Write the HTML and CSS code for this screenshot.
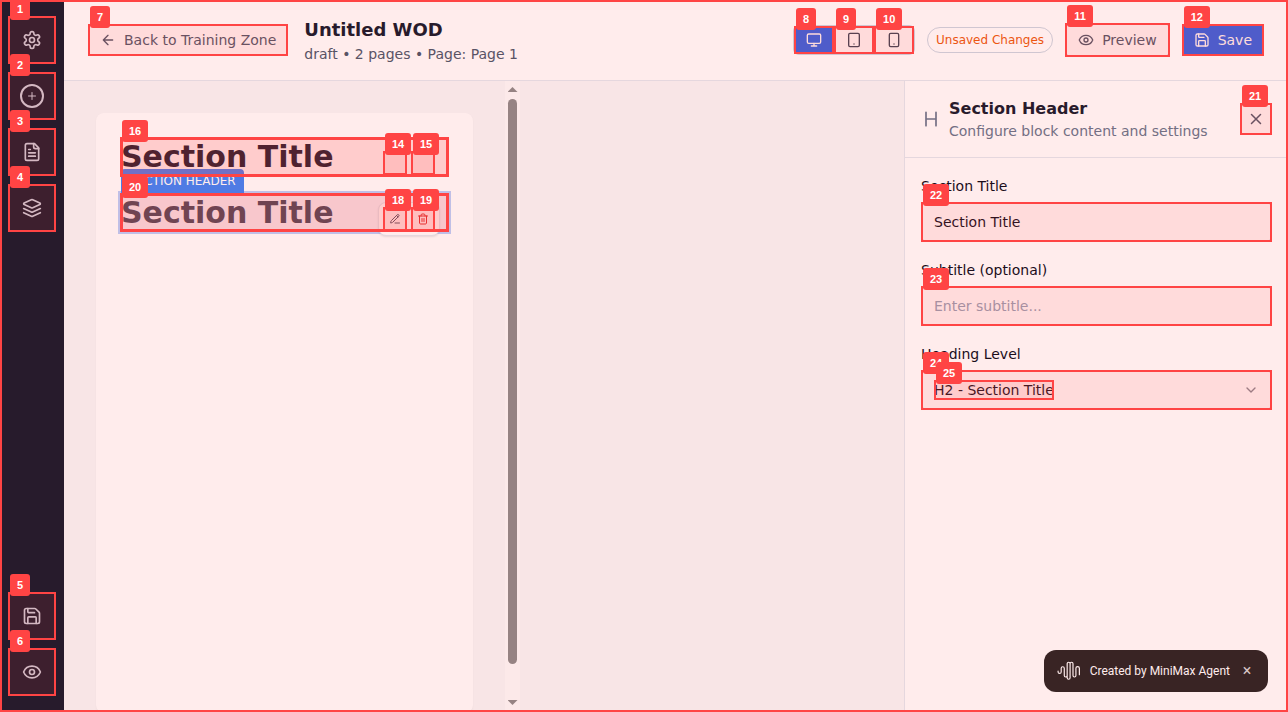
FILE: index.html
```html
<!DOCTYPE html>
<html lang="en">
<head>
<meta charset="utf-8">
<title>Untitled WOD</title>
<link rel="stylesheet" href="styles.css">
</head>
<body>
<div class="app">
  <nav class="rail" aria-label="Tools">
    <button class="rail-btn" aria-label="Settings"><svg class="icon i20" viewBox="0 0 24 24"><path d="M12.22 2h-.44a2 2 0 0 0-2 2v.18a2 2 0 0 1-1 1.73l-.43.25a2 2 0 0 1-2 0l-.15-.08a2 2 0 0 0-2.73.73l-.22.38a2 2 0 0 0 .73 2.73l.15.1a2 2 0 0 1 1 1.72v.51a2 2 0 0 1-1 1.74l-.15.09a2 2 0 0 0-.73 2.73l.22.38a2 2 0 0 0 2.73.73l.15-.08a2 2 0 0 1 2 0l.43.25a2 2 0 0 1 1 1.73V20a2 2 0 0 0 2 2h.44a2 2 0 0 0 2-2v-.18a2 2 0 0 1 1-1.73l.43-.25a2 2 0 0 1 2 0l.15.08a2 2 0 0 0 2.73-.73l.22-.39a2 2 0 0 0-.73-2.73l-.15-.08a2 2 0 0 1-1-1.74v-.5a2 2 0 0 1 1-1.74l.15-.09a2 2 0 0 0 .73-2.73l-.22-.38a2 2 0 0 0-2.73-.73l-.15.08a2 2 0 0 1-2 0l-.43-.25a2 2 0 0 1-1-1.73V4a2 2 0 0 0-2-2z"/><circle cx="12" cy="12" r="3"/></svg><span class="mark"><b>1</b></span></button>
    <button class="rail-btn" aria-label="Add block"><span class="ring"><svg class="icon i12" viewBox="0 0 24 24"><path d="M5 12h14M12 5v14"/></svg></span><span class="mark"><b>2</b></span></button>
    <button class="rail-btn" aria-label="Pages"><svg class="icon i20" viewBox="0 0 24 24"><path d="M15 2H6a2 2 0 0 0-2 2v16a2 2 0 0 0 2 2h12a2 2 0 0 0 2-2V7Z"/><path d="M14 2v4a2 2 0 0 0 2 2h4M10 9H8M16 13H8M16 17H8"/></svg><span class="mark"><b>3</b></span></button>
    <button class="rail-btn" aria-label="Layers"><svg class="icon i20" viewBox="0 0 24 24"><path d="m12.83 2.18a2 2 0 0 0-1.66 0L2.6 6.08a1 1 0 0 0 0 1.83l8.58 3.91a2 2 0 0 0 1.66 0l8.58-3.9a1 1 0 0 0 0-1.83Z"/><path d="m22 17.65-9.17 4.16a2 2 0 0 1-1.66 0L2 17.65"/><path d="m22 12.65-9.17 4.16a2 2 0 0 1-1.66 0L2 12.65"/></svg><span class="mark"><b>4</b></span></button>
    <span class="spacer"></span>
    <button class="rail-btn" aria-label="Save page"><svg class="icon i20" viewBox="0 0 24 24"><path d="M15.2 3a2 2 0 0 1 1.4.6l3.8 3.8a2 2 0 0 1 .6 1.4V19a2 2 0 0 1-2 2H5a2 2 0 0 1-2-2V5a2 2 0 0 1 2-2z"/><path d="M17 21v-7a1 1 0 0 0-1-1H8a1 1 0 0 0-1 1v7M7 3v4a1 1 0 0 0 1 1h7"/></svg><span class="mark"><b>5</b></span></button>
    <button class="rail-btn" aria-label="Preview page"><svg class="icon i20" viewBox="0 0 24 24"><path d="M2.062 12.348a1 1 0 0 1 0-.696 10.75 10.75 0 0 1 19.876 0 1 1 0 0 1 0 .696 10.75 10.75 0 0 1-19.876 0"/><circle cx="12" cy="12" r="3"/></svg><span class="mark"><b>6</b></span></button>
  </nav>

  <div class="workspace">
    <header class="topbar">
      <button class="btn back"><svg class="icon i16" viewBox="0 0 24 24"><path d="m12 19-7-7 7-7M19 12H5"/></svg>Back to Training Zone<span class="mark"><b>7</b></span></button>
      <div class="doc">
        <h1>Untitled WOD</h1>
        <p>draft • 2 pages • Page: Page 1</p>
      </div>
      <div class="actions">
        <div class="devices">
          <button class="device active" aria-label="Desktop"><svg class="icon i16" viewBox="0 0 24 24"><rect width="20" height="14" x="2" y="3" rx="2"/><path d="M8 21h8M12 17v4"/></svg><span class="mark"><b>8</b></span></button>
          <button class="device" aria-label="Tablet"><svg class="icon i16" viewBox="0 0 24 24"><rect width="16" height="20" x="4" y="2" rx="2"/><path d="M12 18h.01"/></svg><span class="mark"><b>9</b></span></button>
          <button class="device" aria-label="Phone"><svg class="icon i16" viewBox="0 0 24 24"><rect width="14" height="20" x="5" y="2" rx="2"/><path d="M12 18h.01"/></svg><span class="mark"><b>10</b></span></button>
        </div>
        <span class="status">Unsaved Changes</span>
        <button class="btn outline"><svg class="icon i16" viewBox="0 0 24 24"><path d="M2.062 12.348a1 1 0 0 1 0-.696 10.75 10.75 0 0 1 19.876 0 1 1 0 0 1 0 .696 10.75 10.75 0 0 1-19.876 0"/><circle cx="12" cy="12" r="3"/></svg>Preview<span class="mark"><b>11</b></span></button>
        <button class="btn primary"><svg class="icon i16" viewBox="0 0 24 24"><path d="M15.2 3a2 2 0 0 1 1.4.6l3.8 3.8a2 2 0 0 1 .6 1.4V19a2 2 0 0 1-2 2H5a2 2 0 0 1-2-2V5a2 2 0 0 1 2-2z"/><path d="M17 21v-7a1 1 0 0 0-1-1H8a1 1 0 0 0-1 1v7M7 3v4a1 1 0 0 0 1 1h7"/></svg>Save<span class="mark"><b>12</b></span></button>
      </div>
    </header>

    <div class="body">
      <main class="stage">
        <div class="canvas">
          <div class="sheet">
            <section class="block">
              <h2>Section Title</h2>
              <span class="mark double"><b>16</b></span>
              <div class="tools ghost">
                <button class="tool" aria-label="Edit first block"><span class="mark"><b>14</b></span></button>
                <button class="tool" aria-label="Delete first block"><span class="mark"><b>15</b></span></button>
              </div>
            </section>
            <section class="block selected">
              <span class="tag">SECTION HEADER</span>
              <h2>Section Title</h2>
              <span class="mark double"><b>20</b></span>
              <div class="tools">
                <button class="tool" aria-label="Edit block"><svg class="icon i12" viewBox="0 0 24 24"><path d="M12 20h9M16.376 3.622a1 1 0 0 1 3.002 3.002L7.368 18.635a2 2 0 0 1-.855.506l-2.872.838a.5.5 0 0 1-.62-.62l.838-2.872a2 2 0 0 1 .506-.854zM15 5l3 3"/></svg><span class="mark"><b>18</b></span></button>
                <button class="tool danger" aria-label="Delete block"><svg class="icon i12" viewBox="0 0 24 24"><path d="M3 6h18M19 6v14c0 1-1 2-2 2H7c-1 0-2-1-2-2V6M8 6V4c0-1 1-2 2-2h4c1 0 2 1 2 2v2M10 11v6M14 11v6"/></svg><span class="mark"><b>19</b></span></button>
              </div>
            </section>
          </div>
        </div>
        <div class="scrollbar" aria-hidden="true">
          <span class="arrow up"></span><span class="thumb"></span><span class="arrow down"></span>
        </div>
      </main>

      <aside class="panel">
        <div class="panel-head">
          <svg class="icon i20" viewBox="0 0 24 24"><path d="M6 12h12M6 20V4M18 20V4"/></svg>
          <div class="panel-title">
            <h3>Section Header</h3>
            <p>Configure block content and settings</p>
          </div>
          <button class="close" aria-label="Close panel"><svg class="icon i18" viewBox="0 0 24 24"><path d="M18 6 6 18M6 6l12 12"/></svg><span class="mark"><b>21</b></span></button>
        </div>
        <form class="fields">
          <div class="field">
            <label for="title">Section Title</label>
            <div class="control"><input id="title" type="text" value="Section Title"><span class="mark"><b>22</b></span></div>
          </div>
          <div class="field">
            <label for="subtitle">Subtitle (optional)</label>
            <div class="control"><input id="subtitle" type="text" placeholder="Enter subtitle..."><span class="mark"><b>23</b></span></div>
          </div>
          <div class="field">
            <label for="level">Heading Level</label>
            <div class="control"><select id="level"><option>H2 - Section Title</option></select><svg class="icon i16 chevron" viewBox="0 0 24 24"><path d="m6 9 6 6 6-6"/></svg><span class="mark"><b>24</b></span><span class="mark value-mark"><b>25</b></span></div>
          </div>
        </form>
      </aside>
    </div>
  </div>

  <div class="toast">
    <svg class="wave" viewBox="0 0 26 22"><path d="M1 11v1a1.700 1.700 0 0 0 3.400 0V8a1.700 1.700 0 0 1 3.400 0v8a1.600 1.600 0 0 0 3.200 0V3a1.600 1.600 0 0 1 3.200 0v10M11 14v4.500a1.600 1.600 0 0 0 3.200 0V3a1.600 1.600 0 0 1 3.200 0v13a1.600 1.600 0 0 0 3.200 0V8a1.900 1.900 0 0 1 3.800 0v7"/></svg>
    <span>Created by MiniMax Agent</span>
    <button class="toast-close" aria-label="Dismiss">×</button>
  </div>
  <span class="mark frame"></span>
</div>
</body>
</html>
```
FILE: styles.css
```css
* { box-sizing: border-box; }
body, h1, h2, h3, p { margin: 0; }
body { font: 14px/20px "DejaVu Sans", sans-serif; color: #0f172a; background: #fff; }
button, input, select { font: inherit; color: inherit; margin: 0; }
button { border: 0; background: none; padding: 0; display: flex; align-items: center; justify-content: center; position: relative; }

.app { position: relative; display: flex; height: 100vh; overflow: hidden; }
.icon { flex: none; fill: none; stroke: currentColor; stroke-width: 2; stroke-linecap: round; stroke-linejoin: round; }
.i20 { width: 20px; height: 20px; }
.i18 { width: 18px; height: 18px; }
.i16 { width: 16px; height: 16px; }
.i12 { width: 12px; height: 12px; }

/* numbered element outlines */
.mark { position: absolute; inset: 0; z-index: 10; border: 2px solid #f44; background: rgba(255, 68, 68, .1); pointer-events: none; }
.mark b { position: absolute; left: 0; top: -20px; padding: 0 7px; border-radius: 3px; background: #f44; color: #fff; font: bold 11px/22px "Liberation Sans", sans-serif; }
.mark.double { border-width: 3px; background: rgba(255, 68, 68, .19); }
.mark.double b { left: -1px; top: -20px; }
.mark.frame { z-index: 5; }

.rail { width: 64px; flex: none; display: flex; flex-direction: column; gap: 8px; padding: 16px 8px; background: #0f172a; color: #cbd5e1; }
.rail-btn { height: 48px; flex: none; }
.spacer { flex: 1; }
.ring { width: 24px; height: 24px; border: 2px solid #cbd5e1; border-radius: 50%; display: grid; place-items: center; }

.workspace { flex: 1; min-width: 0; display: flex; flex-direction: column; }
.topbar { display: flex; align-items: center; gap: 16px; padding: 16px 24px; border-bottom: 1px solid #e2e8f0; }
.btn { gap: 8px; height: 32px; padding: 0 12px; border-radius: 6px; color: #475569; white-space: nowrap; }
.outline { height: 34px; border: 1px solid #cbd5e1; }
.outline .mark { inset: -1px; }
.primary { background: #2563eb; color: #fff; }
.doc h1 { font-size: 18px; line-height: 28px; }
.doc p { color: #475569; }
.actions { margin-left: auto; display: flex; align-items: center; gap: 12px; }
.devices { display: flex; border: 1px solid #cbd5e1; border-radius: 6px; }
.device { width: 40px; height: 28px; color: #334155; }
.device.active { background: #2563eb; color: #fff; }
.status { padding: 2px 8px; border: 1px solid #cbd5e1; border-radius: 13px; font-size: 12px; color: #ea580c; line-height: 20px; white-space: nowrap; }

.body { flex: 1; min-height: 0; display: flex; }
.stage { flex: 1; min-width: 0; display: flex; background: #f8f8f9; }
.canvas { width: 441px; padding: 32px; overflow: hidden; }
.sheet { display: flex; flex-direction: column; gap: 16px; min-height: 600px; padding: 24px; border-radius: 8px; background: #fff; box-shadow: 0 1px 2px rgba(0, 0, 0, .05); }
.block { position: relative; height: 40px; padding-top: 2px; }
.block h2 { padding-left: 1px; font-size: 30px; line-height: 36px; }
.selected { height: 39px; background: #f6f8ff; outline: 2px solid #b9cdf9; }
.selected h2 { color: #3c4558; }
.tag { position: absolute; left: 1px; bottom: 100%; padding: 0 8px; border-radius: 4px 4px 0 0; background: #3b82f6; color: #fff; font-size: 12px; line-height: 24px; white-space: nowrap; }
.tools { position: absolute; right: 9px; top: 9px; display: flex; gap: 4px; padding: 4px; border: 1px solid #e2e8f0; border-radius: 8px; background: #fff; box-shadow: 0 1px 2px rgba(0, 0, 0, .1); }
.tools.ghost { background: none; border-color: transparent; box-shadow: none; }
.tool { width: 24px; height: 24px; color: #475569; }
.danger { color: #dc2626; }

.scrollbar { width: 15px; flex: none; display: flex; flex-direction: column; align-items: center; padding: 6px 0 7px; background: #fcfcfc; }
.arrow { width: 10px; height: 5px; background: #8b8b8b; }
.up { clip-path: polygon(50% 0, 100% 100%, 0 100%); }
.down { clip-path: polygon(0 0, 100% 0, 50% 100%); }
.thumb { width: 9px; flex: 1; margin: 7px 0 36px; border-radius: 5px; background: #8b8b8b; }

.panel { width: 384px; flex: none; border-left: 1px solid #e2e8f0; background: #fff; }
.panel-head { display: flex; align-items: center; gap: 8px; padding: 16px; border-bottom: 1px solid #e2e8f0; color: #64748b; }
.panel-title { flex: 1; }
.panel-title h3 { font-size: 16px; line-height: 24px; color: #0f172a; }
.close { width: 32px; height: 32px; color: #475569; }
.fields { display: flex; flex-direction: column; gap: 16px; padding: 16px; }
.field { display: flex; flex-direction: column; gap: 4px; }
.field label { line-height: 24px; color: #020817; }
.control { position: relative; }
.control input, .control select { display: block; width: 100%; height: 40px; padding: 0 12px; border: 1px solid #e2e8f0; border-radius: 6px; background: #fff; color: #020817; appearance: none; }
.control input::placeholder { color: #94a3b8; opacity: 1; }
.chevron { position: absolute; right: 13px; top: 12px; opacity: .5; }
.value-mark { inset: 10px auto 10px 13px; width: 120px; }

.toast { position: absolute; right: 20px; bottom: 20px; display: flex; align-items: center; gap: 8px; height: 42px; padding: 0 12px; border-radius: 12px; background: #232121; color: #fff; font: 12px/18px Roboto, sans-serif; }
.wave { width: 26px; height: 20px; fill: none; stroke: #fff; stroke-width: 1.3; stroke-linecap: round; }
.toast-close { width: 18px; height: 18px; font-size: 16px; color: #d4d4d4; }
```
